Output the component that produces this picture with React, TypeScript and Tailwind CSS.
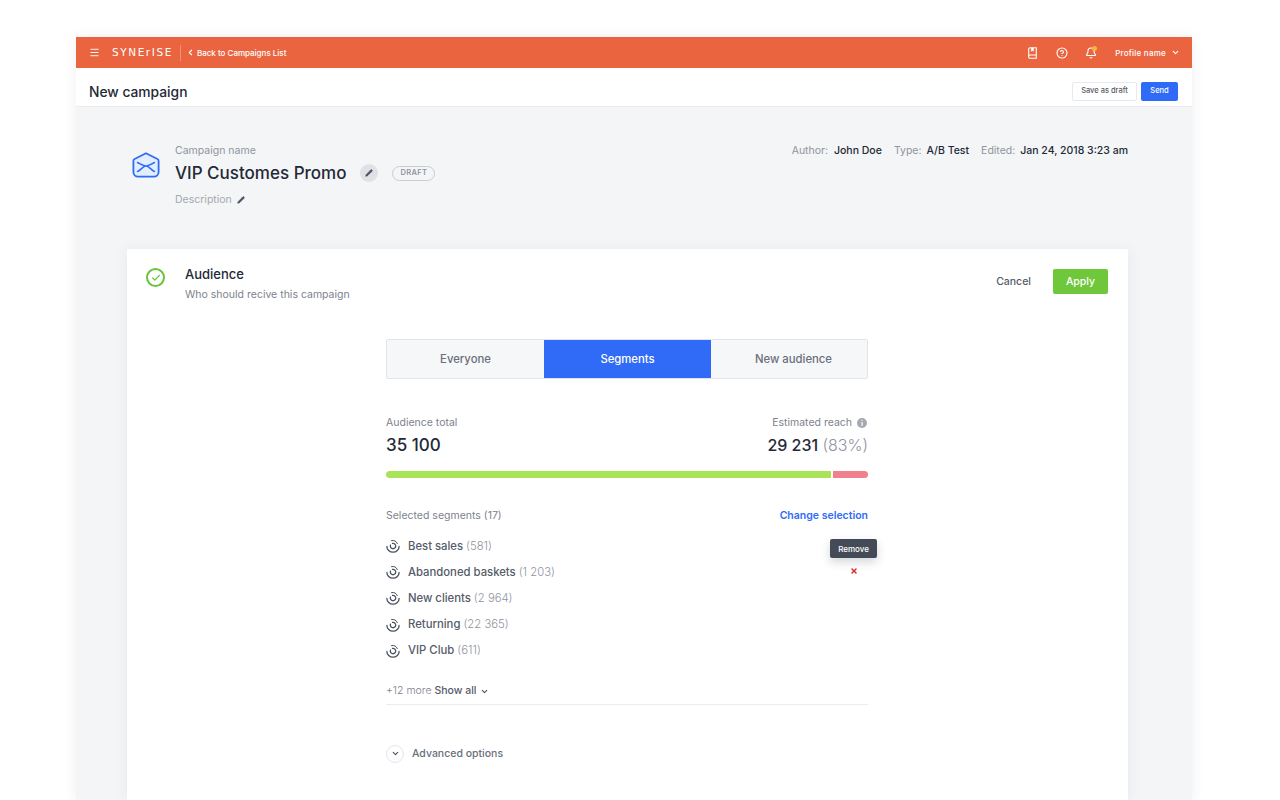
import { Check, ChevronDown, ChevronLeft, CircleHelp, Bell, Menu, Pencil, X } from "lucide-react";

const segments = [
  { name: "Best sales", count: "581" },
  { name: "Abandoned baskets", count: "1 203" },
  { name: "New clients", count: "2 964" },
  { name: "Returning", count: "22 365" },
  { name: "VIP Club", count: "611" },
];

function SegmentIcon() {
  return (
    <svg width="14" height="14" viewBox="0 0 14 14" fill="none" stroke="#4b5160" strokeWidth="1.3" strokeLinecap="round" className="shrink-0">
      <path d="M.9 7.4a6.1 5.8 0 0 0 12.2 0" />
      <path d="M4.5 6.1a2.7 2.7 0 1 0 2-1.7" />
      <path d="M5.5 1.6a5 5 0 0 1 5.8 3" strokeWidth="1" />
    </svg>
  );
}

function MailIcon() {
  return (
    <svg width="28" height="26" viewBox="0 0 28 26" fill="none" className="shrink-0">
      <path d="M14 1.2 25.4 7a2 2 0 0 1 1.2 1.9V20a4.6 4.6 0 0 1-4.6 4.6H6A4.6 4.6 0 0 1 1.4 20V8.9A2 2 0 0 1 2.6 7z" fill="#e2edfd" stroke="#2f6bf6" strokeWidth="1.8" strokeLinejoin="round" />
      <path d="M5.5 10.5C9 12 11 14 14 14s5-2 8.5-3.5M5.5 19.5C9 18 11 14 14 14s5 4 8.5 5.5" stroke="#2f6bf6" strokeWidth="1.5" strokeLinecap="round" />
    </svg>
  );
}

function BookIcon() {
  return (
    <svg width="11" height="12" viewBox="0 0 11 12" fill="none" stroke="currentColor" strokeWidth="1.1" strokeLinejoin="round" className="shrink-0">
      <path d="M1.7 9.3V2a1.3 1.3 0 0 1 1.3-1.3h6.3v10.6H3a1.3 1.3 0 0 1-1.3-1.3v-.7A1.3 1.3 0 0 1 3 8h6.3" />
      <path d="M4.2 1v3.4l1.2-.8 1.2.8V1" fill="currentColor" strokeWidth="0.4" />
    </svg>
  );
}

function InfoDot() {
  return (
    <div className="ml-[5px] mr-[1px] flex h-[10px] w-[10px] items-center justify-center rounded-full bg-[#a5a9b1] text-[7px] font-bold leading-none text-white">
      i
    </div>
  );
}

export default function App() {
  return (
    <div className="h-[800px] overflow-hidden bg-white pt-[37px] font-['Inter',sans-serif] text-[#232936]">
      <div className="ml-[76px] flex h-[763px] w-[1116px] flex-col bg-[#f4f5f7] shadow-[0_0_12px_rgba(40,50,70,0.08)]">
        <header className="flex h-[31px] shrink-0 items-center bg-[#ea653f] pl-[13px] pr-[12px] text-white">
          <Menu className="h-[11px] w-[11px]" strokeWidth={2} />
          <span className="ml-[12px] font-['DejaVu_Sans',sans-serif] text-[10.5px] leading-none tracking-[0.15em]">SYNErISE</span>
          <div className="ml-[7px] h-[16px] w-px bg-white/30" />
          <ChevronLeft className="ml-[5px] h-[9px] w-[9px]" strokeWidth={3} />
          <span className="ml-[2px] text-[8px] font-medium">Back to Campaigns List</span>
          <div className="ml-auto flex items-center">
            <BookIcon />
            <CircleHelp className="ml-[18px] h-[12px] w-[12px]" strokeWidth={2.2} />
            <div className="relative ml-[17px]">
              <Bell className="h-[12px] w-[12px]" strokeWidth={2.2} />
              <div className="absolute right-0 top-[-1px] h-[5px] w-[5px] rounded-full bg-[#f5b53c]" />
            </div>
            <span className="ml-[18px] text-[8px] font-medium tracking-[0.03em]">Profile name</span>
            <ChevronDown className="ml-[5px] h-[9px] w-[9px]" strokeWidth={3} />
          </div>
        </header>

        <div className="flex h-[39px] shrink-0 items-center justify-between border-b border-[#e9ebef] bg-white pl-[13px] pr-[14px] pt-[8px]">
          <h1 className="mt-[2px] text-[13.8px] font-medium">New campaign</h1>
          <div className="flex gap-[4px]">
            <button className="h-[19px] w-[65px] rounded-[2px] border border-[#e6e9ee] bg-white text-[7.5px] font-medium text-[#555b68]">Save as draft</button>
            <button className="h-[19px] w-[37px] rounded-[2px] bg-[#2f6bf6] text-[7.5px] font-medium text-white">Send</button>
          </div>
        </div>

        <div className="flex h-[142px] shrink-0 pl-[56px] pr-[64px] pt-[37px]">
          <div className="mt-[8px]">
            <MailIcon />
          </div>
          <div className="ml-[15px] flex flex-col">
            <span className="text-[10.5px] leading-[14px] text-[#8f949e]">Campaign name</span>
            <div className="mt-[1px] flex h-[28px] items-center">
              <span className="text-[17px] font-medium leading-none">VIP Customes Promo</span>
              <div className="ml-[14px] flex h-[18px] w-[18px] items-center justify-center rounded-full bg-[#dfe1e5]">
                <Pencil className="h-[8px] w-[8px] fill-[#4b5160] text-[#4b5160]" strokeWidth={1.5} />
              </div>
              <span className="ml-[14px] flex h-[15px] w-[43px] items-center justify-center rounded-full border border-[#c9ccd2] text-[7.5px] font-semibold tracking-[0.04em] text-[#8f949e]">DRAFT</span>
            </div>
            <div className="mt-[6px] flex items-center">
              <span className="text-[10.5px] leading-[14px] text-[#a5a9b1]">Description</span>
              <Pencil className="ml-[5px] h-[8px] w-[8px] fill-[#4b5160] text-[#4b5160]" strokeWidth={1.5} />
            </div>
          </div>
          <div className="ml-auto flex gap-[12px] text-[10.5px] leading-[14px]">
            <span className="text-[#8f949e]">Author: <span className="ml-[3px] font-medium text-[#232936]">John Doe</span></span>
            <span className="text-[#8f949e]">Type: <span className="ml-[2px] font-medium text-[#232936]">A/B Test</span></span>
            <span className="text-[#8f949e]">Edited: <span className="ml-[2px] font-medium text-[#232936]">Jan 24, 2018 3:23 am</span></span>
          </div>
        </div>

        <div className="ml-[51px] flex w-[1001px] flex-1 flex-col bg-white px-[20px] pt-[20px] shadow-[0_2px_14px_rgba(40,50,70,0.07)]">
          <div className="flex items-start">
            <div className="ml-[-1px] mt-[-1px] flex h-[19px] w-[19px] items-center justify-center rounded-full border-2 border-[#6cc33a]">
              <Check className="h-[10px] w-[10px] text-[#6cc33a]" strokeWidth={3} />
            </div>
            <div className="ml-[20px] mt-[-3px]">
              <div className="text-[13px] font-medium leading-[16px]">Audience</div>
              <div className="mt-[6px] text-[10.5px] leading-[14px] text-[#7d828d]">Who should recive this campaign</div>
            </div>
            <div className="ml-auto flex items-center">
              <span className="text-[10.5px] font-medium text-[#555b68]">Cancel</span>
              <button className="ml-[22px] h-[25px] w-[55px] rounded-[2px] bg-[#6fc73c] text-[10.5px] font-medium text-white">Apply</button>
            </div>
          </div>

          <div className="ml-[239px] mt-[37px] flex w-[482px] flex-col">
            <div className="flex h-[40px] overflow-hidden rounded-[2px] border border-[#e1e4e9] bg-[#f6f7f9] text-[11.3px] font-medium text-[#6a6f7b]">
              <div className="flex w-[157px] items-center justify-center">Everyone</div>
              <div className="flex w-[167px] items-center justify-center bg-[#2f6bf6] text-white">Segments</div>
              <div className="flex flex-1 items-center justify-center pl-[9px]">New audience</div>
            </div>

            <div className="mt-[37px] flex justify-between">
              <div>
                <div className="text-[10.5px] leading-[14px] text-[#7d828d]">Audience total</div>
                <div className="mt-[3px] text-[17px] font-medium leading-[24px]">35 100</div>
              </div>
              <div className="flex flex-col items-end">
                <div className="flex items-center text-[10.5px] leading-[14px] text-[#7d828d]">
                  Estimated reach
                  <InfoDot />
                </div>
                <div className="mt-[3px] text-[16px] font-medium leading-[24px]">
                  29 231 <span className="font-light text-[#8f949e]">(83%)</span>
                </div>
              </div>
            </div>

            <div className="mt-[14px] flex h-[7px] gap-[2px] overflow-hidden rounded-full">
              <div className="w-[445px] bg-[#a9e458]" />
              <div className="flex-1 bg-[#f0818c]" />
            </div>

            <div className="mt-[31px] flex items-center justify-between">
              <span className="text-[10.5px] leading-[14px] text-[#7d828d]">Selected segments (17)</span>
              <span className="text-[10.5px] font-semibold leading-[14px] text-[#2f6bf6]">Change selection</span>
            </div>

            <div className="relative mt-[10px] flex flex-col">
              {segments.map((s) => (
                <div key={s.name} className="flex h-[26.2px] items-center text-[11.3px]">
                  <SegmentIcon />
                  <span className="ml-[8px] font-medium text-[#555b68]">{s.name}</span>
                  <span className="ml-[3px] font-light text-[#8f949e]">({s.count})</span>
                </div>
              ))}
              <div className="absolute left-[444px] top-[6px] flex h-[19px] w-[47px] items-center justify-center rounded-[2px] bg-[#454a57] text-[8px] font-medium text-white shadow-[0_4px_10px_rgba(40,50,70,0.2)]">Remove</div>
              <X className="absolute left-[464px] top-[34px] h-[8px] w-[8px] text-[#e02b2b]" strokeWidth={4.5} />
            </div>

            <div className="mt-[20px] flex h-[21px] items-start border-b border-[#ebedf0] text-[10.5px] leading-[14px]">
              <span className="font-light text-[#7d828d]">+12 more</span>
              <span className="ml-[3px] font-medium text-[#555b68]">Show all</span>
              <ChevronDown className="ml-[3px] mt-[3px] h-[9px] w-[9px] text-[#4b5160]" strokeWidth={3} />
            </div>

            <div className="mt-[40px] flex items-center">
              <div className="flex h-[18px] w-[18px] items-center justify-center rounded-full border border-[#e1e4e9]">
                <ChevronDown className="h-[9px] w-[9px] text-[#4b5160]" strokeWidth={3} />
              </div>
              <span className="ml-[8px] text-[10.5px] font-medium text-[#6a6f7b]">Advanced options</span>
            </div>
          </div>
        </div>
      </div>
    </div>
  );
}
